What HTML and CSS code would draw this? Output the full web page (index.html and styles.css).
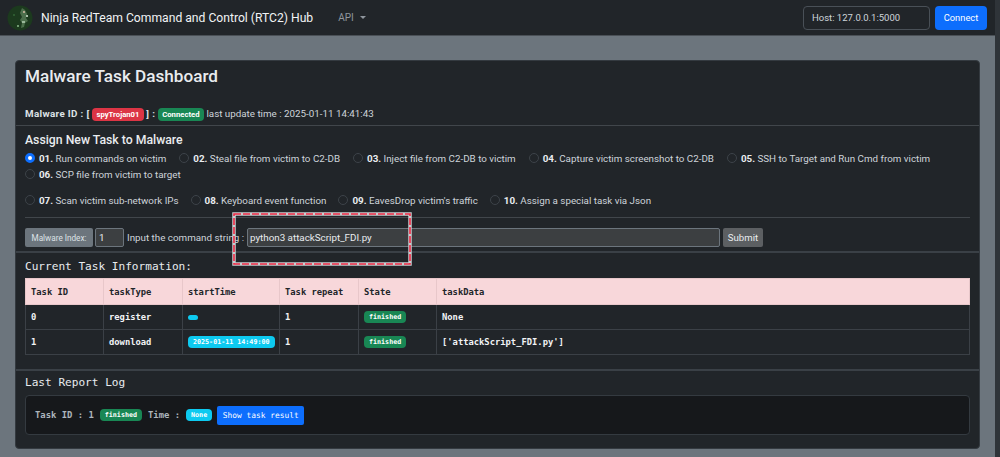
FILE: index.html
```html
<!DOCTYPE html>
<html lang="en">
<head>
<meta charset="utf-8">
<title>Ninja RedTeam Command and Control Hub</title>
<link rel="stylesheet" href="styles.css">
</head>
<body>
<div class="page">
  <div class="main">
    <nav class="navbar">
      <svg class="logo" width="26" height="26" viewBox="0 0 26 26">
        <circle cx="13" cy="13" r="12.5" fill="#1c3a1e"/>
        <path d="M15 3l3 2 2 4-1 4 2 3-3 2-1 4-3 1 1-5-2-3 2-3-2-4z" fill="#4c6f4c"/>
        <rect x="16" y="6" width="2" height="2" fill="#b5a98f"/>
        <rect x="19" y="10" width="2" height="2" fill="#a9c0a9"/>
        <rect x="15" y="16" width="3" height="2" fill="#9ab89a"/>
        <rect x="10" y="20" width="2" height="2" fill="#6f9a6f"/>
        <rect x="6" y="9" width="2" height="2" fill="#2d5a30"/>
      </svg>
      <span class="brand">Ninja RedTeam Command and Control (RTC2) Hub</span>
      <span class="nav-link">API<i class="caret"></i></span>
      <span class="nav-spacer"></span>
      <span class="host">Host: 127.0.0.1:5000</span>
      <button class="connect">Connect</button>
    </nav>
    <section class="card">
      <div class="card-head">
        <h1>Malware Task Dashboard</h1>
        <p class="status"><b>Malware ID : [</b> <span class="badge red">spyTrojan01</span> <b>] :</b> <span class="badge green">Connected</span> last update time : 2025-01-11 14:41:43</p>
      </div>
      <div class="assign">
        <h2>Assign New Task to Malware</h2>
        <div class="radios row-a">
          <label class="radio"><i class="dot on"></i><span><b>01.</b> Run commands on victim</span></label>
          <label class="radio"><i class="dot"></i><span><b>02.</b> Steal file from victim to C2-DB</span></label>
          <label class="radio"><i class="dot"></i><span><b>03.</b> Inject file from C2-DB to victim</span></label>
          <label class="radio"><i class="dot"></i><span><b>04.</b> Capture victim screenshot to C2-DB</span></label>
          <label class="radio"><i class="dot"></i><span><b>05.</b> SSH to Target and Run Cmd from victim</span></label>
          <label class="radio"><i class="dot"></i><span><b>06.</b> SCP file from victim to target</span></label>
        </div>
        <div class="radios row-b">
          <label class="radio"><i class="dot"></i><span><b>07.</b> Scan victim sub-network IPs</span></label>
          <label class="radio"><i class="dot"></i><span><b>08.</b> Keyboard event function</span></label>
          <label class="radio"><i class="dot"></i><span><b>09.</b> EavesDrop victim's traffic</span></label>
          <label class="radio"><i class="dot"></i><span><b>10.</b> Assign a special task via Json</span></label>
        </div>
        <hr class="rule">
        <div class="cmd">
          <span class="index-label">Malware Index:</span>
          <span class="index-input">1</span>
          <span class="cmd-label">Input the command string :</span>
          <span class="cmd-input">python3 attackScript_FDI.py</span>
          <button class="submit">Submit</button>
        </div>
      </div>
      <div class="tasks">
        <h3>Current Task Information:</h3>
        <table>
          <colgroup>
            <col class="c1"><col class="c2"><col class="c3"><col class="c4"><col class="c5"><col class="c6">
          </colgroup>
          <thead>
            <tr><th>Task ID</th><th>taskType</th><th>startTime</th><th>Task repeat</th><th>State</th><th>taskData</th></tr>
          </thead>
          <tbody>
            <tr><td>0</td><td>register</td><td><span class="pill cyan empty"></span></td><td>1</td><td><span class="pill green">finished</span></td><td>None</td></tr>
            <tr><td>1</td><td>download</td><td><span class="pill cyan">2025-01-11 14:49:00</span></td><td>1</td><td><span class="pill green">finished</span></td><td>['attackScript_FDI.py']</td></tr>
          </tbody>
        </table>
      </div>
      <div class="log">
        <h3>Last Report Log</h3>
        <div class="log-box">
          <span>Task ID : 1</span>
          <span class="pill green">finished</span>
          <span>Time :</span>
          <span class="pill cyan">None</span>
          <button class="show">Show task result</button>
        </div>
      </div>
    </section>
  </div>
  <div class="scrollbar"></div>
</div>
<svg class="callout" width="180" height="54" viewBox="0 0 180 54">
  <rect class="callout-base" x="2" y="2" width="176" height="50"/>
  <rect class="callout-dash" x="2" y="2" width="176" height="50"/>
</svg>
</body>
</html>
```
FILE: styles.css
```css
* { box-sizing: border-box; }
html, body { margin: 0; height: 100%; overflow: hidden; }
body {
  font-family: Roboto, "Noto Sans", sans-serif;
  color: #dee2e6;
  background: #6c757d;
  position: relative;
}
.page { display: flex; height: 457px; }
.main { flex: 1; min-width: 0; }
.scrollbar { width: 5px; background: #2f3439; }

.navbar {
  height: 36px;
  display: flex;
  align-items: center;
  padding: 0 8px 0 7px;
  background: #212529;
  border-bottom: 1px solid #4a5056;
}
.logo { flex: none; }
.brand { margin-left: 8px; font-size: 12.15px; color: #f1f3f5; white-space: nowrap; }
.nav-link { margin-left: 25px; font-size: 10px; color: #8f969d; display: inline-flex; align-items: center; }
.caret {
  margin-left: 6px;
  border-top: 3px solid #8f969d;
  border-left: 3px solid transparent;
  border-right: 3px solid transparent;
}
.nav-spacer { flex: 1; }
.host {
  width: 127px;
  height: 24px;
  padding-left: 8px;
  display: flex;
  align-items: center;
  font-size: 9.5px;
  color: #ced4da;
  background: #212529;
  border: 1px solid #495057;
  border-radius: 4px;
}
.connect {
  margin-left: 5px;
  width: 52px;
  height: 24px;
  padding: 0;
  font: inherit;
  font-size: 9.3px;
  color: #fff;
  background: #0d6efd;
  border: 0;
  border-radius: 4px;
}

.card {
  margin: 24px 0 0 15px;
  width: 965px;
  height: 389px;
  background: #212529;
  border: 1px solid #343a40;
  border-radius: 4px;
}
.card-head { height: 65px; padding: 4px 9px 0; border-bottom: 1px solid #41464b; }
h1 { margin: 0; font-size: 17.15px; line-height: 22px; font-weight: 500; color: #e9ecef; }
.status { margin: 20px 0 0; font-size: 9.8px; line-height: 14px; color: #ced4da; }
.status b { color: #dee2e6; letter-spacing: 0.35px; }
.badge {
  display: inline-block;
  padding: 0 4.5px;
  font-size: 7.7px;
  line-height: 13px;
  font-weight: 700;
  color: #fff;
  border-radius: 4px;
}
.red { background: #dc3545; }
.green { background: #198754; }
.cyan { background: #0dcaf0; }

.assign { height: 127px; padding: 6px 9px 0; border-bottom: 2px solid #3a4046; }
h2 { margin: 0; font-size: 12.25px; line-height: 16px; font-weight: 500; color: #e9ecef; }
.radios { display: flex; flex-wrap: wrap; font-size: 9.8px; color: #ced4da; }
.row-a { margin-top: 2px; column-gap: 13px; width: 940px; }
.row-b { margin-top: 10px; column-gap: 12px; }
.radio { display: inline-flex; align-items: center; gap: 4px; height: 16px; }
.radio b { color: #e9ecef; }
.dot {
  flex: none;
  width: 10px;
  height: 10px;
  border: 1px solid #3d4349;
  border-radius: 50%;
  background: #212529;
}
.dot.on { border: 3px solid #0d6efd; background: #fff; }
.rule { margin: 9px 0 10px; border: 0; border-top: 1px solid #41464b; }
.cmd { display: flex; align-items: center; height: 19px; font-size: 9.8px; color: #ced4da; }
.index-label {
  width: 68px;
  height: 19px;
  display: flex;
  align-items: center;
  justify-content: center;
  font-size: 8.2px;
  color: #dee2e6;
  background: #6c757d;
  border-radius: 2px;
}
.index-input {
  margin-left: 2px;
  width: 29px;
  height: 19px;
  padding-left: 3px;
  display: flex;
  align-items: center;
  background: #3c3f41;
  border: 1px solid #6c757d;
  border-radius: 2px;
  color: #e9ecef;
}
.cmd-label { margin-left: 3px; width: 120px; white-space: nowrap; }
.cmd-input {
  width: 473px;
  height: 19px;
  padding-left: 2px;
  display: flex;
  align-items: center;
  background: #3c3f41;
  border: 1px solid #6c757d;
  border-radius: 2px;
  color: #e9ecef;
}
.submit {
  margin-left: 3px;
  width: 40px;
  height: 19px;
  padding: 0;
  font: inherit;
  font-size: 9.6px;
  color: #e9ecef;
  background: #5c5f62;
  border: 0;
  border-radius: 2px;
}

.tasks { height: 118px; padding: 6px 9px 0; border-bottom: 2px solid #3a4046; }
h3 {
  margin: 0;
  font-family: "DejaVu Sans Mono", monospace;
  font-size: 11.1px;
  line-height: 15px;
  font-weight: 400;
  color: #e9ecef;
}
table {
  margin-top: 4px;
  width: 945px;
  table-layout: fixed;
  border-collapse: collapse;
  font-family: "DejaVu Sans Mono", monospace;
  font-size: 8.8px;
  font-weight: 700;
}
.c1 { width: 78px; }
.c2 { width: 79px; }
.c3 { width: 97px; }
.c4 { width: 79px; }
.c5 { width: 78px; }
th, td { padding: 0 5px; text-align: left; border: 1px solid #3b4046; white-space: nowrap; }
th { height: 26px; background: #f8d7da; color: #212529; border-color: #e8c7ca; font-weight: 700; }
td { height: 25px; color: #f1f3f5; }
.pill {
  display: inline-block;
  padding: 0 5px;
  font-family: "DejaVu Sans Mono", monospace;
  font-size: 6.7px;
  line-height: 12.5px;
  font-weight: 700;
  color: #fff;
  border-radius: 4px;
  vertical-align: middle;
  white-space: nowrap;
}
.pill.empty { width: 10px; height: 5px; padding: 0; }

.log { padding: 4px 9px 0; }
.log-box {
  margin-top: 5px;
  height: 40px;
  padding: 0 9px;
  display: flex;
  align-items: center;
  gap: 6px;
  font-family: "DejaVu Sans Mono", monospace;
  font-size: 8.9px;
  font-weight: 700;
  color: #adb5bd;
  background: #16181b;
  border: 1px solid #343a40;
  border-radius: 4px;
}
.show {
  margin-left: -1px;
  width: 87px;
  height: 19px;
  padding: 0;
  font-family: "DejaVu Sans Mono", monospace;
  font-size: 7.9px;
  color: #fff;
  background: #0d6efd;
  border: 0;
  border-radius: 2px;
}

.callout {
  position: absolute;
  left: 232px;
  top: 212px;
  fill: none;
}
.callout-base { stroke: #c9cdd0; stroke-width: 3.5; }
.callout-dash { stroke: #ee2b45; stroke-width: 1.6; stroke-dasharray: 7 2; }
```
